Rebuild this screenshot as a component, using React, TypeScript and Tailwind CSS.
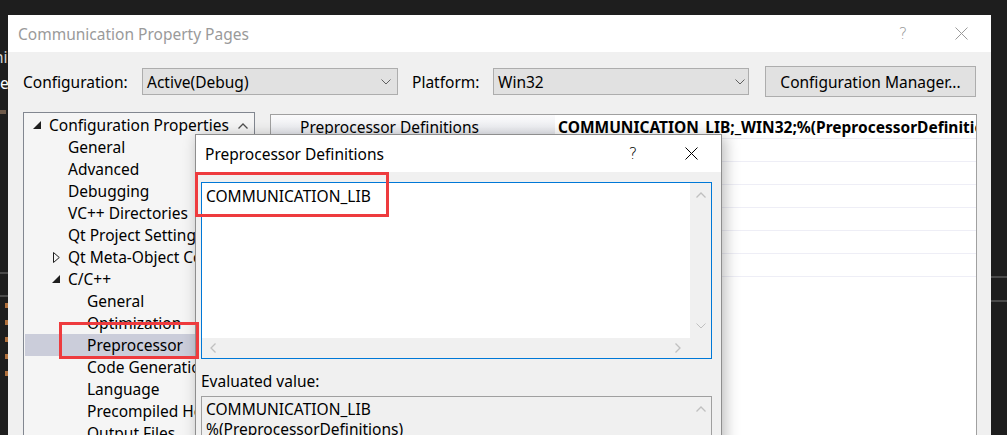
import React from "react";

const ChevronDown = ({ color = "#606060" }: { color?: string }) => (
  <svg width="10" height="6" viewBox="0 0 10 6">
    <path d="M0.5 0.5 L5 5 L9.5 0.5" stroke={color} strokeWidth="1" fill="none" />
  </svg>
);
const ChevronUp = ({ color = "#606060" }: { color?: string }) => (
  <svg width="10" height="6" viewBox="0 0 10 6">
    <path d="M0.5 5.5 L5 1 L9.5 5.5" stroke={color} strokeWidth="1.3" fill="none" />
  </svg>
);
const ChevronLeft = ({ color = "#c0c0c0" }: { color?: string }) => (
  <svg width="6" height="10" viewBox="0 0 6 10">
    <path d="M5.5 0.5 L1 5 L5.5 9.5" stroke={color} strokeWidth="1.3" fill="none" />
  </svg>
);
const ChevronRight = ({ color = "#c0c0c0" }: { color?: string }) => (
  <svg width="6" height="10" viewBox="0 0 6 10">
    <path d="M0.5 0.5 L5 5 L0.5 9.5" stroke={color} strokeWidth="1.3" fill="none" />
  </svg>
);
const CloseX = ({ color = "#000", size = 13 }: { color?: string; size?: number }) => (
  <svg width={size} height={size} viewBox="0 0 13 13">
    <path d="M0.5 0.5 L12.5 12.5 M12.5 0.5 L0.5 12.5" stroke={color} strokeWidth="1" fill="none" />
  </svg>
);
const Expanded = () => (
  <svg width="8" height="8" viewBox="0 0 8 8">
    <polygon points="8,0 8,8 0,8" fill="#1e1e1e" />
  </svg>
);
const Collapsed = () => (
  <svg width="7" height="11" viewBox="0 0 7 11">
    <polygon points="0.5,0.5 6.3,5.5 0.5,10.5" fill="none" stroke="#1e1e1e" strokeWidth="1" />
  </svg>
);

type Row = { label: string; level: number; exp?: "open" | "closed"; selected?: boolean };
const rows: Row[] = [
  { label: "Configuration Properties", level: 0, exp: "open" },
  { label: "General", level: 1 },
  { label: "Advanced", level: 1 },
  { label: "Debugging", level: 1 },
  { label: "VC++ Directories", level: 1 },
  { label: "Qt Project Settings", level: 1 },
  { label: "Qt Meta-Object Compiler", level: 1, exp: "closed" },
  { label: "C/C++", level: 1, exp: "open" },
  { label: "General", level: 2 },
  { label: "Optimization", level: 2 },
  { label: "Preprocessor", level: 2, selected: true },
  { label: "Code Generation", level: 2 },
  { label: "Language", level: 2 },
  { label: "Precompiled Headers", level: 2 },
  { label: "Output Files", level: 2 },
];

const indentCls = ["w-[8px]", "w-[27px]", "w-[46px]"];

export default function App() {
  return (
    <div className="relative w-[1007px] h-[435px] overflow-hidden bg-[#1e1e1e] flex items-start font-['Noto_Sans',sans-serif] text-[15.5px] text-black leading-[20px]">
      {/* left editor strip */}
      <div className="w-[8px] h-[435px] shrink-0 overflow-hidden flex flex-col text-[#d4d4d4] whitespace-nowrap">
        <div className="h-[47px] shrink-0" />
        <div className="h-[20px] shrink-0 -ml-[6px]">ni</div>
        <div className="h-[6px] shrink-0" />
        <div className="h-[20px] shrink-0 text-white">e(</div>
        <div className="h-[15px] shrink-0" />
        <div className="h-[4px] w-[6px] shrink-0 mt-[2px] bg-[#6e5a4a]" />
        <div className="h-[158px] shrink-0" />
        <div className="h-[2px] shrink-0 bg-[#4a4a4a]" />
        <div className="h-[21px] shrink-0" />
        <div className="h-[2px] shrink-0 bg-[#4a4a4a]" />
        <div className="h-[6px] shrink-0" />
        <div className="flex flex-col gap-[12px] pl-[5px]">
          <div className="w-[3px] h-[5px] bg-[#b0703c]" />
          <div className="w-[3px] h-[5px] bg-[#b0703c]" />
          <div className="w-[3px] h-[5px] bg-[#b0703c]" />
          <div className="w-[3px] h-[5px] bg-[#b0703c]" />
          <div className="w-[3px] h-[5px] bg-[#b0703c]" />
        </div>
      </div>

      {/* main window */}
      <div className="w-[983px] shrink-0 mt-[15px] flex flex-col">
        <div className="h-[37px] shrink-0 bg-white flex items-center pl-[10px]">
          <span className="text-[#9a9a9a]">Communication Property Pages</span>
          <div className="ml-auto flex items-center gap-[12px] mr-[7px]">
            <div className="w-[46px] flex justify-center text-[#9a9a9a] text-[16px] font-['DejaVu_Sans',sans-serif] font-light">?</div>
            <div className="w-[46px] flex justify-center"><CloseX color="#9a9a9a" /></div>
          </div>
        </div>
        <div className="bg-[#f0f0f0] px-[15px] pb-[20px]">
          <div className="pt-[14px] h-[45px] flex items-center">
            <div className="w-[119px]">Configuration:</div>
            <div className="w-[256px] h-[27px] bg-[#e1e1e1] border border-[#adadad] flex items-center pl-[4px] pr-[6px]">
              <span>Active(Debug)</span>
              <span className="ml-auto"><ChevronDown /></span>
            </div>
            <div className="ml-[14px] w-[81px]">Platform:</div>
            <div className="w-[256px] h-[27px] bg-[#e1e1e1] border border-[#adadad] flex items-center pl-[4px] pr-[3px]">
              <span>Win32</span>
              <span className="ml-auto"><ChevronDown /></span>
            </div>
            <div className="ml-[16px] w-[211px] h-[31px] bg-[#e1e1e1] border border-[#adadad] flex items-center justify-center">
              Configuration Manager...
            </div>
          </div>

          <div className="mt-[15px] flex gap-[15px]">
            {/* tree */}
            <div className="w-[232px] h-[340px] border border-[#828790] bg-[#f5f5f5] p-[1px] flex">
              <div className="flex-1 flex flex-col overflow-hidden">
                {rows.map((r, i) => (
                  <div key={i} className={"h-[22px] shrink-0 flex items-center whitespace-nowrap " + (r.selected ? "bg-[#cbcdda]" : "")}>
                    <div className={indentCls[r.level] + " shrink-0"} />
                    <div className="w-[16px] shrink-0 flex items-center">
                      {r.exp === "open" ? <Expanded /> : r.exp === "closed" ? <span className="ml-[1px] flex"><Collapsed /></span> : null}
                    </div>
                    <span>{r.label}</span>
                  </div>
                ))}
              </div>
              <div className="w-[20px] shrink-0 bg-[#f5f5f5] flex justify-center pt-[9px]">
                <ChevronUp color="#505050" />
              </div>
            </div>

            {/* property grid */}
            <div className="mt-[2px] w-[707px] h-[340px] border border-[#a0a0a0] bg-white flex flex-col">
              <div className="h-[24px] shrink-0 flex border-b border-[#eeeef6]">
                <div className="w-[284px] shrink-0 bg-gradient-to-b from-[#fbfbfc] to-[#e4e6ec] pl-[29px] flex items-center">
                  Preprocessor Definitions
                </div>
                <div className="flex-1 pl-[3px] flex items-center font-bold whitespace-nowrap overflow-hidden">
                  COMMUNICATION_LIB;_WIN32;%(PreprocessorDefinitions)
                </div>
              </div>
              {[0, 1, 2, 3, 4, 5].map((i) => (
                <div key={i} className="h-[23px] shrink-0 border-b border-[#eeeef6]" />
              ))}
            </div>
          </div>
        </div>
      </div>

      {/* right strip */}
      <div className="w-[16px] shrink-0 flex flex-col">
        <div className="h-[276px]" />
        <div className="h-[2px] bg-[#4a4a4a]" />
        <div className="h-[22px]" />
        <div className="h-[2px] bg-[#4a4a4a]" />
      </div>

      {/* dialog */}
      <div className="absolute left-[195px] top-[134px] w-[527px] h-[320px] border border-[#8e8e8e] bg-[#f0f0f0] flex flex-col shadow-[3px_2px_14px_rgba(0,0,0,0.28)]">
        <div className="h-[37px] shrink-0 bg-white flex items-center pl-[9px]">
          <span>Preprocessor Definitions</span>
          <div className="ml-auto flex items-center gap-[12px] mr-[7px]">
            <div className="w-[46px] flex justify-center text-[16px] font-['DejaVu_Sans',sans-serif] font-light">?</div>
            <div className="w-[46px] flex justify-center"><CloseX color="#000" /></div>
          </div>
        </div>
        <div className="pl-[5px] pt-[10px] flex flex-col">
          <div className="w-[511px] h-[177px] shrink-0 border border-[#0078d7] bg-white flex flex-col">
            <div className="flex-1 flex">
              <div className="flex-1 pl-[4px] pt-[3px]">COMMUNICATION_LIB</div>
              <div className="w-[21px] bg-[#f0f0f0] flex flex-col items-center justify-between pt-[9px] pb-[9px]">
                <ChevronUp color="#c0c0c0" />
                <ChevronDown color="#c0c0c0" />
              </div>
            </div>
            <div className="h-[20px] shrink-0 bg-[#f0f0f0] flex items-center pl-[8px] pr-[30px] justify-between">
              <ChevronLeft />
              <ChevronRight />
            </div>
          </div>
          <div className="mt-[12px] h-[20px] shrink-0">Evaluated value:</div>
          <div className="mt-[5px] w-[511px] h-[80px] shrink-0 border border-[#a0a0a0] bg-[#f0f0f0] flex">
            <div className="flex-1 pl-[4px] pt-[2px]">
              <div className="h-[20px]">COMMUNICATION_LIB</div>
              <div className="h-[20px]">%(PreprocessorDefinitions)</div>
            </div>
            <div className="w-[21px] flex justify-center pt-[9px]">
              <ChevronUp color="#c0c0c0" />
            </div>
          </div>
        </div>
      </div>

      {/* red annotation boxes */}
      <div className="absolute left-[195px] top-[172px] w-[194px] h-[45px] border-[3px] border-[#ee3b3e]" />
      <div className="absolute left-[59px] top-[322px] w-[140px] h-[37px] border-[3px] border-[#ee3b3e]" />
    </div>
  );
}
